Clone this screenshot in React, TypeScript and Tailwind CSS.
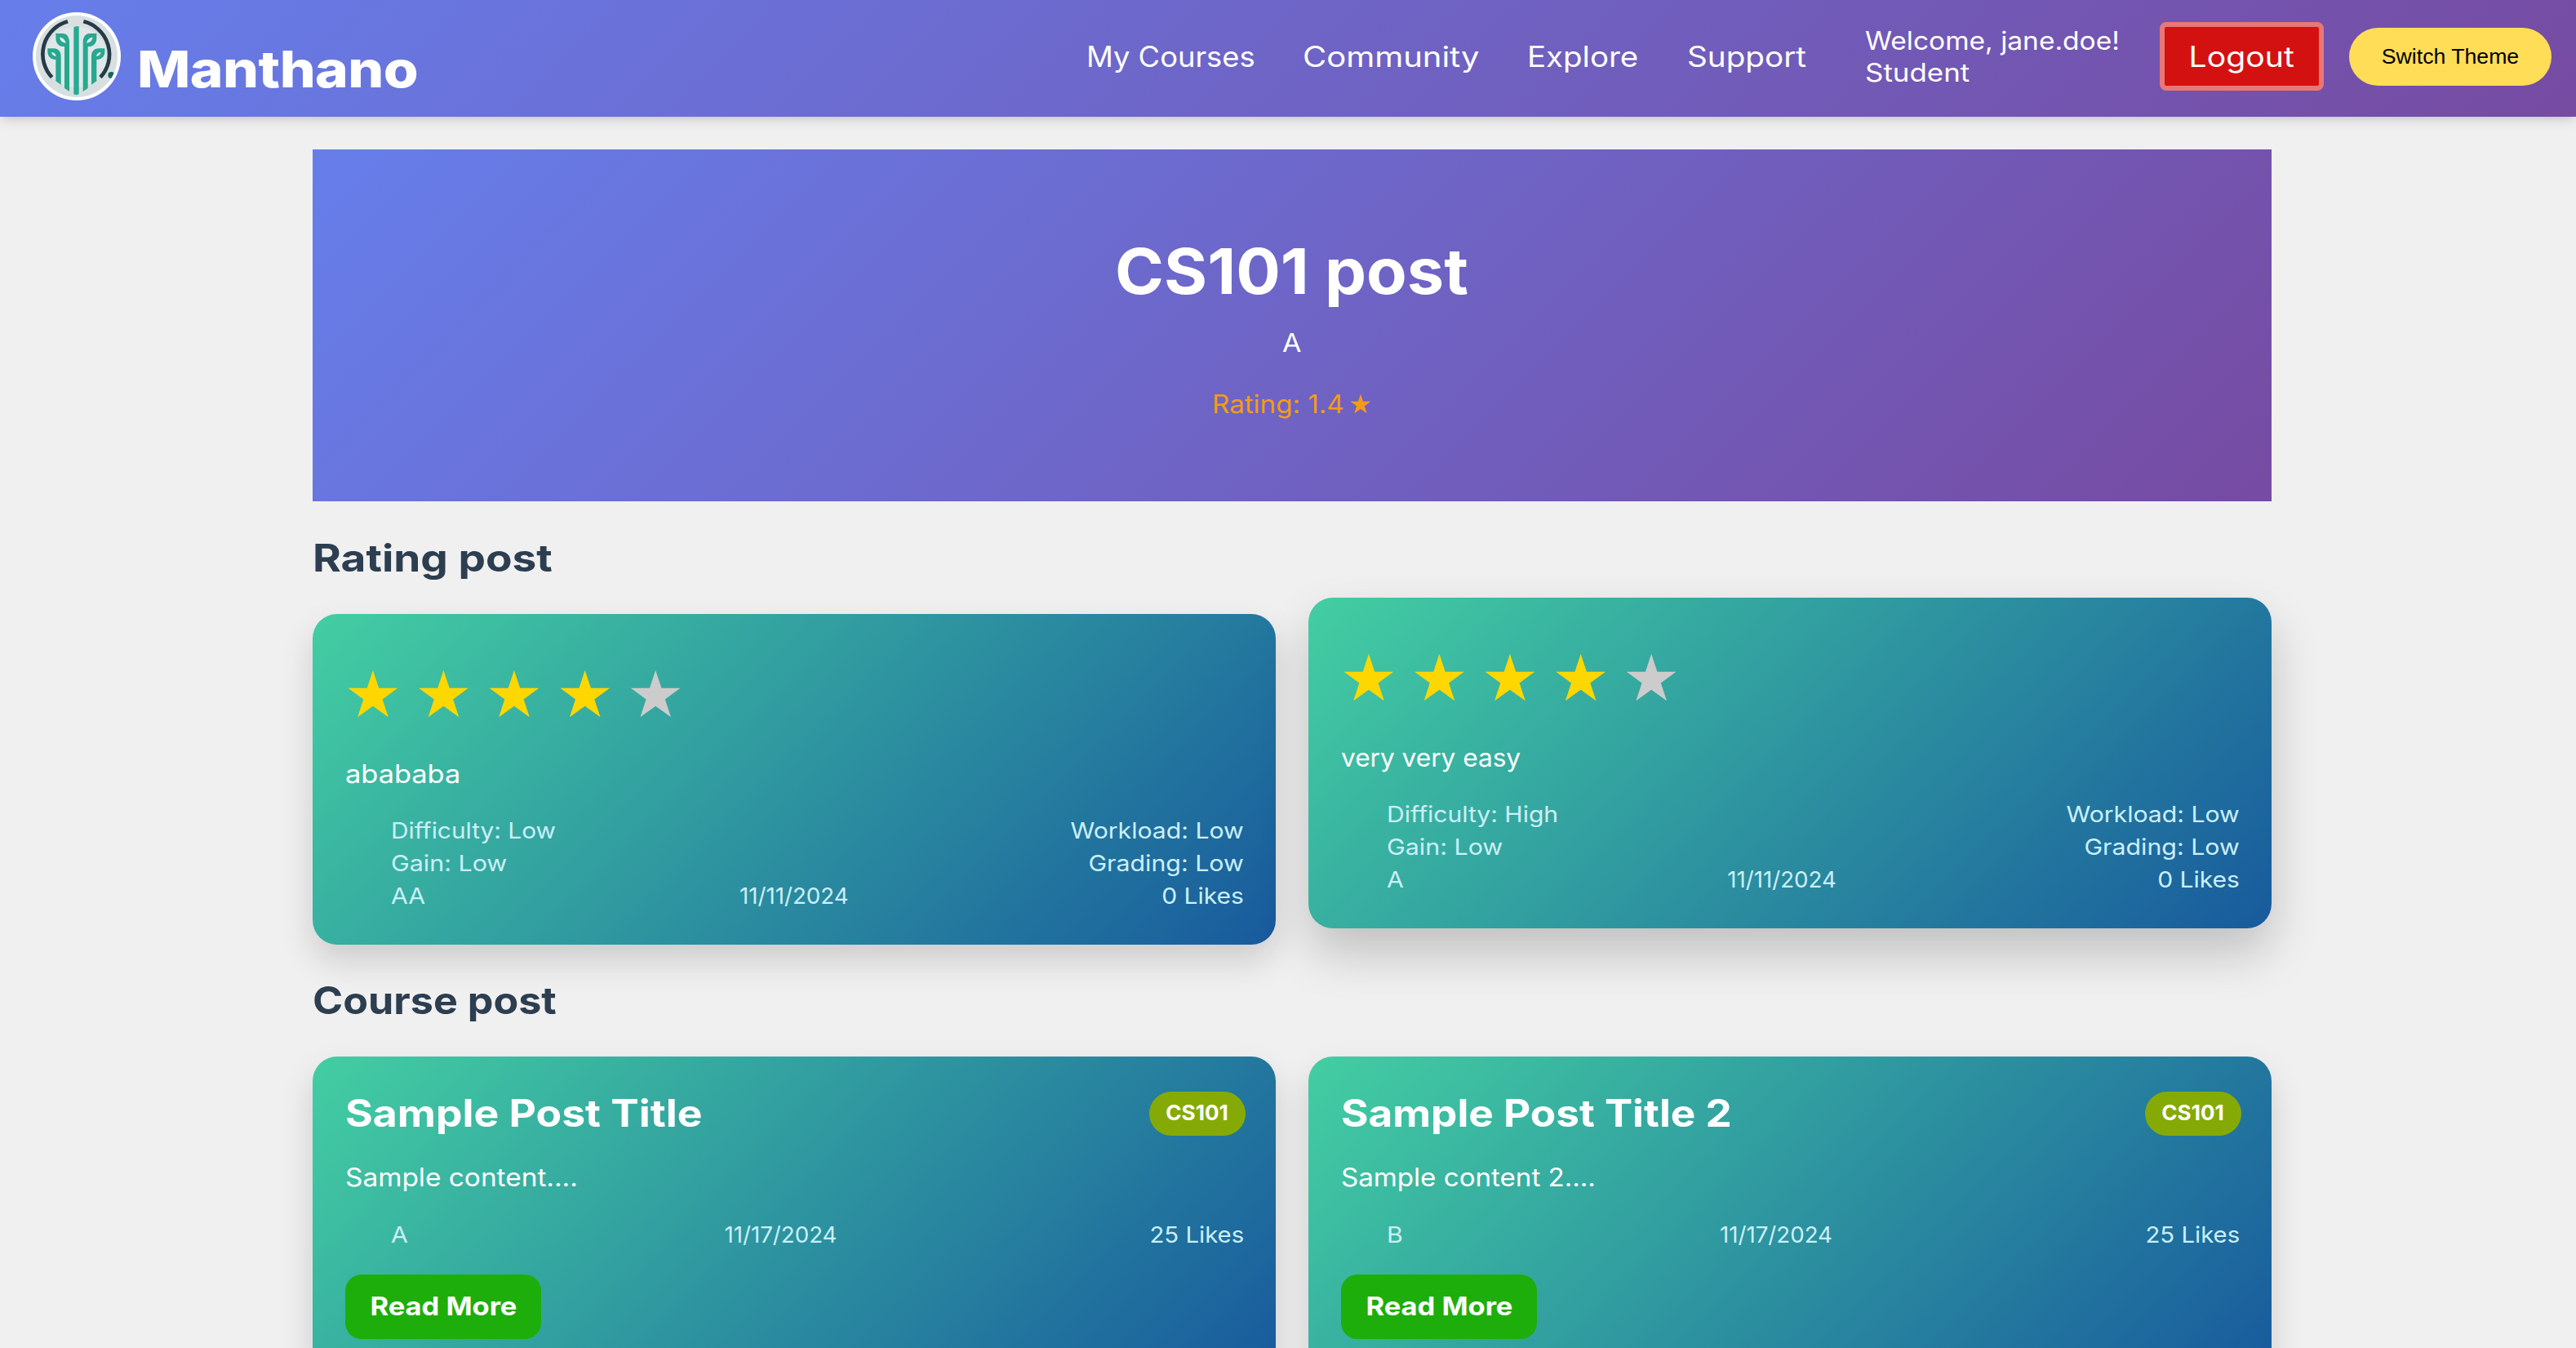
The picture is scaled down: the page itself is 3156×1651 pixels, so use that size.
import type { ReactNode } from 'react'

type RatingPost = {
  text: string
  textStretch: string
  difficulty: string
  difficultyStretch: string
  author: string
  raised?: boolean
}

type CoursePost = {
  title: string
  titleStretch: string
  text: string
  textStretch: string
  author: string
}

const ratingPosts: RatingPost[] = [
  {
    text: 'abababa',
    textStretch: 'scale-x-[1.115]',
    difficulty: 'Low',
    difficultyStretch: 'scale-x-[1.077]',
    author: 'AA',
  },
  {
    text: 'very very easy',
    textStretch: 'scale-x-[1.026]',
    difficulty: 'High',
    difficultyStretch: 'scale-x-[1.085]',
    author: 'A',
    raised: true,
  },
]

const coursePosts: CoursePost[] = [
  {
    title: 'Sample Post Title',
    titleStretch: 'scale-x-[1.118]',
    text: 'Sample content....',
    textStretch: 'scale-x-[1.084]',
    author: 'A',
  },
  {
    title: 'Sample Post Title 2',
    titleStretch: 'scale-x-[1.11]',
    text: 'Sample content 2....',
    textStretch: 'scale-x-[1.075]',
    author: 'B',
  },
]

function Logo() {
  const innerLeaf =
    'M115 123H140C156 123 165 137 165 155V336L147 324V171H141C124 170 115 155 115 140Z'
  const outerLeaf =
    'M85 178H108C124 178 134 190 134 206V311L115 298V219C97 219 85 206 85 192Z'
  return (
    <svg viewBox="30 45 324 324" className="size-[108px] shrink-0">
      <defs>
        <clipPath id="logo-disc">
          <circle cx="192" cy="207" r="150" />
        </clipPath>
      </defs>
      <circle cx="192" cy="207" r="162" fill="#fff" />
      <circle cx="192" cy="207" r="150" fill="#d7dfe1" />
      <g clipPath="url(#logo-disc)">
        <circle cx="190" cy="210" r="112" fill="#dfe7e9" />
        <circle cx="319" cy="276" r="12" fill="#14675f" />
        <g fill="none" stroke="#263b45" strokeWidth="14" strokeLinecap="butt">
          <path d="M159 79A124 124 0 0 0 101 284" />
          <path d="M217 79A124 124 0 0 1 279 284" />
        </g>
        <path d="M181 100Q190 95 200 97V346Q190 352 181 346Z" fill="#27aa93" />
        <g fill="#27a88f">
          <path d={innerLeaf} />
          <path d={outerLeaf} />
          <g transform="matrix(-1 0 0 1 380 0)">
            <path d={innerLeaf} />
            <path d={outerLeaf} />
          </g>
        </g>
        <g fill="#e3ecec">
          <path d="M129 137Q147 138 152 158Q133 156 129 137Z" />
          <path d="M251 137Q233 138 228 158Q247 156 251 137Z" />
          <path d="M99 192Q112 192 117 207Q102 206 99 192Z" />
          <path d="M281 192Q268 192 263 207Q278 206 281 192Z" />
        </g>
      </g>
    </svg>
  )
}

function Header() {
  return (
    <header className="flex h-[143px] items-center bg-[linear-gradient(135deg,#667eea_0%,#764ba2_100%)] pr-[30px] pb-[5px] pl-10 text-white shadow-[0_8px_12px_-2px_rgba(0,0,0,0.1),0_4px_8px_-4px_rgba(0,0,0,0.1)]">
      <Logo />
      <span className="mt-[31px] ml-[20px] origin-left scale-x-[1.125] text-[61.6px] leading-[62px] font-extrabold tracking-[-0.5px]">
        Manthano
      </span>
      <nav className="ml-auto flex text-[34.7px] leading-[44px] whitespace-nowrap">
        <a className="w-[265px] origin-left">
          <span className="inline-block origin-left scale-x-[1.047]">My Courses</span>
        </a>
        <a className="w-[275px]">
          <span className="inline-block origin-left scale-x-[1.152]">Community</span>
        </a>
        <a className="w-[196px]">
          <span className="inline-block origin-left scale-x-[1.108]">Explore</span>
        </a>
        <a className="w-[218px]">
          <span className="inline-block origin-left scale-x-[1.114]">Support</span>
        </a>
      </nav>
      <div className="flex w-[361px] flex-col items-start text-[30.8px] leading-[39px] whitespace-nowrap">
        <div className="origin-left scale-x-[1.088]">Welcome, jane.doe!</div>
        <div className="origin-left scale-x-[1.133]">Student</div>
      </div>
      <button className="h-[84px] w-[201px] rounded-lg border-6 border-[#e87777] bg-[#d41111] text-[34.7px] leading-[44px]">
        <span className="inline-block scale-x-[1.129]">Logout</span>
      </button>
      <button className="ml-[31px] h-[71px] w-[248px] rounded-[40px] bg-[#ffdd57] pb-px font-['Liberation_Sans',sans-serif] text-[26.67px] leading-8 text-black">
        Switch Theme
      </button>
    </header>
  )
}

function Hero() {
  return (
    <section className="flex h-[431px] flex-col items-center bg-[linear-gradient(135deg,#667eea_0%,#764ba2_100%)] pt-[100px] text-white">
      <h1 className="scale-x-[1.053] text-[77px] leading-[98px] font-bold">CS101 post</h1>
      <p className="mt-[15px] scale-x-[1.1] text-[30.8px] leading-[48px]">A</p>
      <p className="mt-[27px] flex text-[30.8px] leading-[48px] text-[#f39c12]">
        <span className="mr-[11px] origin-left scale-x-[1.075]">Rating: 1.4</span>
        <span className="ml-[6px] font-['DejaVu_Sans',sans-serif] text-[32px]">★</span>
      </p>
    </section>
  )
}

function SectionTitle({ className, children }: { className: string; children: ReactNode }) {
  return (
    <h2
      className={`w-fit origin-left text-[46.2px] leading-[58px] font-bold text-[#2c3e50] ${className}`}
    >
      {children}
    </h2>
  )
}

function Stars({ value }: { value: number }) {
  return (
    <div className="-ml-[9.5px] flex h-[116px] items-center pt-[2px] font-['DejaVu_Sans',sans-serif] text-[79px] leading-[114px]">
      {[1, 2, 3, 4, 5].map((n) => (
        <span
          key={n}
          className={`w-[86.6px] text-center ${n <= value ? 'text-[#ffd700]' : 'text-[#cccccc]'}`}
        >
          ★
        </span>
      ))}
    </div>
  )
}

function RatingCard({ post }: { post: RatingPost }) {
  return (
    <article
      className={`h-[405px] rounded-[30px] bg-[linear-gradient(135deg,#43cea2_0%,#185a9d_100%)] p-10 text-white ${
        post.raised
          ? '-translate-y-5 shadow-[0_30px_60px_rgba(0,0,0,0.2)]'
          : 'shadow-[0_20px_40px_rgba(0,0,0,0.15)]'
      }`}
    >
      <Stars value={4} />
      <p className={`mt-4 w-fit origin-left text-[30.8px] leading-[48px] ${post.textStretch}`}>
        {post.text}
      </p>
      <div className="mt-[25px] -mr-px pl-14 text-[27.7px] leading-10 text-[#caf0f8]">
        <div className="flex justify-between">
          <span className={`origin-left ${post.difficultyStretch}`}>
            Difficulty: {post.difficulty}
          </span>
          <span className="origin-right scale-x-[1.09]">Workload: Low</span>
        </div>
        <div className="flex justify-between">
          <span className="origin-left scale-x-[1.099]">Gain: Low</span>
          <span className="origin-right scale-x-[1.095]">Grading: Low</span>
        </div>
        <div className="flex justify-between">
          <span className="origin-left scale-x-[1.09]">{post.author}</span>
          <span className="mr-[3px]">11/11/2024</span>
          <span className="origin-right scale-x-[1.084]">0 Likes</span>
        </div>
      </div>
    </article>
  )
}

function CourseCard({ post }: { post: CoursePost }) {
  return (
    <article className="h-[386px] rounded-[30px] bg-[linear-gradient(135deg,#43cea2_0%,#185a9d_100%)] p-10 text-white shadow-[0_20px_40px_rgba(0,0,0,0.15)]">
      <div className="-mr-[3px] flex items-center justify-between">
        <h3 className={`origin-left text-[46.2px] leading-[59px] font-bold ${post.titleStretch}`}>
          {post.title}
        </h3>
        <span className="flex h-[54px] w-[118px] items-center justify-center rounded-full bg-[#86aa05] text-[25.6px] font-bold">
          <span className="scale-x-[1.02]">CS101</span>
        </span>
      </div>
      <p className={`mt-[25px] w-fit origin-left text-[30.8px] leading-[48px] ${post.textStretch}`}>
        {post.text}
      </p>
      <div className="mt-[26px] -mr-px flex justify-between pl-14 text-[27.7px] leading-10 text-[#caf0f8]">
        <span className="origin-left scale-x-[1.09]">{post.author}</span>
        <span>11/17/2024</span>
        <span className="origin-right scale-x-[1.06]">25 Likes</span>
      </div>
      <button className="mt-[29px] block h-[79px] w-[240px] rounded-[20px] bg-[#1eae0b] text-[30.8px] font-bold">
        <span className="inline-block scale-x-[1.119]">Read More</span>
      </button>
    </article>
  )
}

export default function App() {
  return (
    <div className="h-[1651px] w-[3156px] overflow-hidden bg-[#f0f0f0] font-['Inter',sans-serif]">
      <Header />
      <main className="mt-10 ml-[383px] w-[2400px]">
        <Hero />
        <SectionTitle className="mt-10 scale-x-[1.15]">Rating post</SectionTitle>
        <div className="mt-10 grid grid-cols-2 gap-10">
          {ratingPosts.map((post) => (
            <RatingCard key={post.text} post={post} />
          ))}
        </div>
        <SectionTitle className="mt-[39px] scale-x-[1.088]">Course post</SectionTitle>
        <div className="mt-10 grid grid-cols-2 gap-10">
          {coursePosts.map((post) => (
            <CourseCard key={post.title} post={post} />
          ))}
        </div>
      </main>
    </div>
  )
}
